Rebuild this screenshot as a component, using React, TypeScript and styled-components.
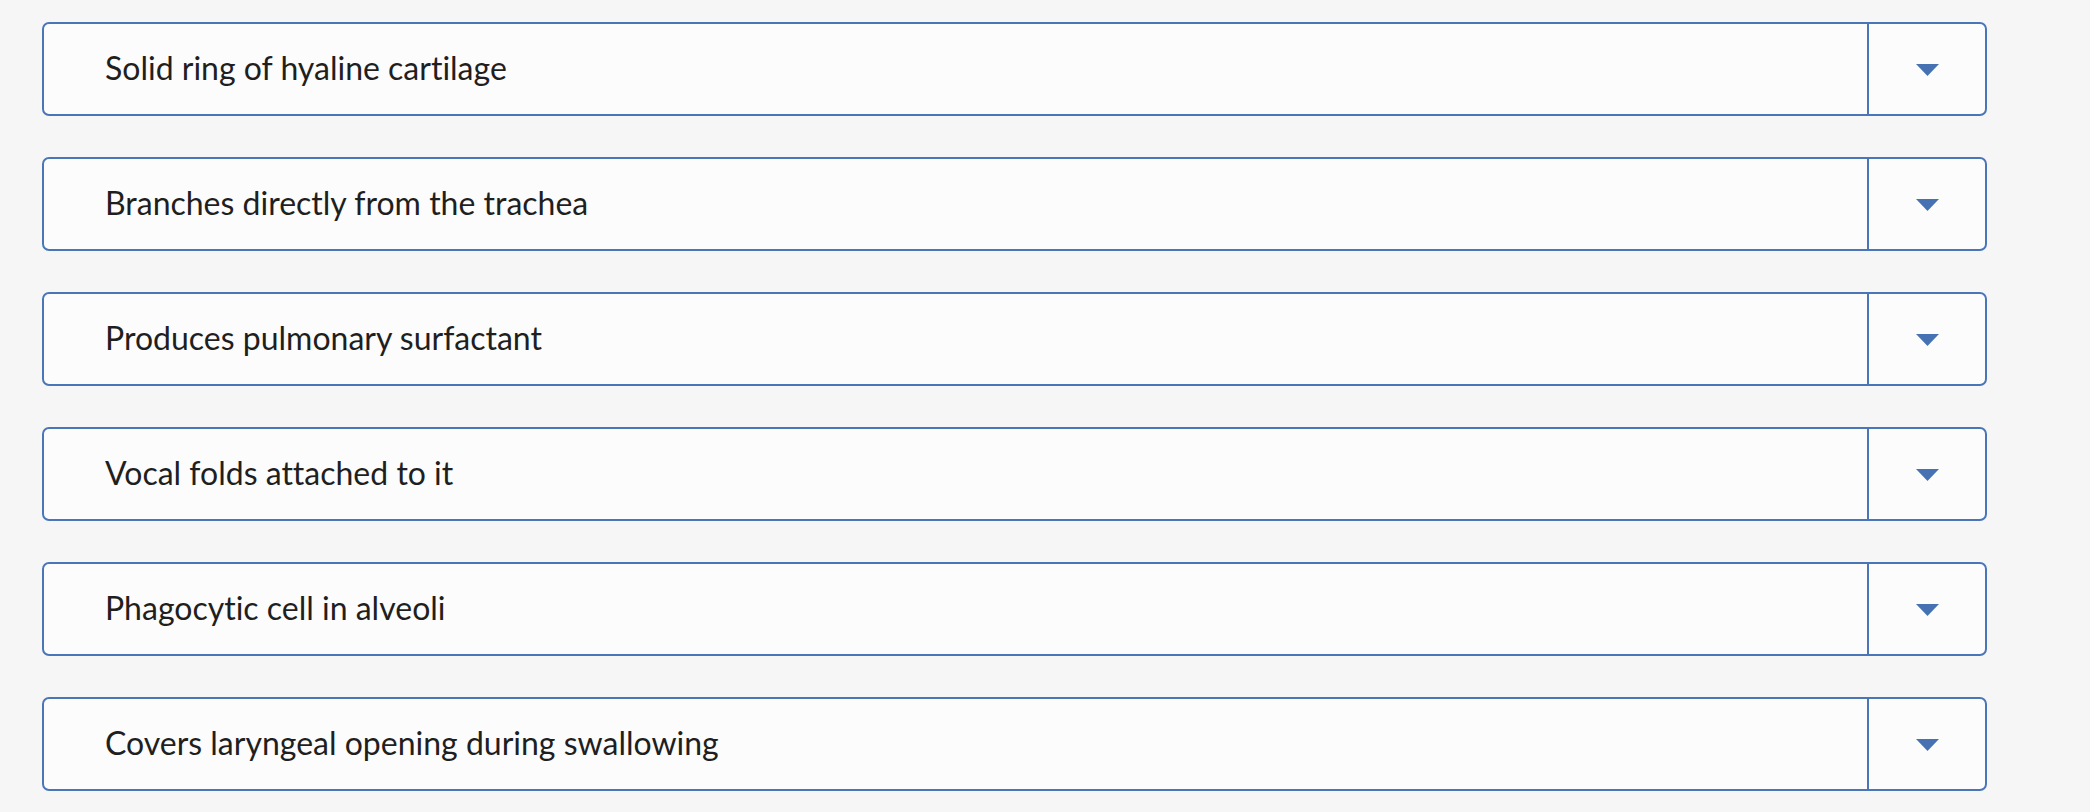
import React from "react";
import styled, { createGlobalStyle } from "styled-components";

const GlobalStyle = createGlobalStyle`
  html, body {
    margin: 0;
    padding: 0;
    background: #f6f6f6;
  }
  body {
    font-family: "Lato", "Open Sans", "Liberation Sans", sans-serif;
  }
`;

const Page = styled.div`
  display: flex;
  flex-direction: column;
  gap: 41px;
  padding: 22px 0 0 42px;
  width: 1945px;
`;

const Row = styled.div`
  display: flex;
  align-items: stretch;
  height: 94px;
  box-sizing: border-box;
  border: 2px solid #4a76b8;
  border-radius: 7px;
  background: #fcfcfc;
`;

const Label = styled.div`
  flex: 1;
  display: flex;
  align-items: center;
  padding-left: 61px;
  padding-bottom: 3px;
  font-size: 32px;
  color: #1f1f1f;
  font-variant-ligatures: none;
  font-feature-settings: "liga" 0, "clig" 0;
`;

const Toggle = styled.div`
  width: 118px;
  box-sizing: border-box;
  display: flex;
  align-items: center;
  justify-content: center;
  border-left: 2px solid #4a76b8;
`;

const Caret = () => (
  <svg width="23" height="12" viewBox="0 0 23 12" style={{ marginTop: 2 }}>
    <polygon points="0,0 23,0 11.5,12" fill="#4672b4" />
  </svg>
);

const items = [
  "Solid ring of hyaline cartilage",
  "Branches directly from the trachea",
  "Produces pulmonary surfactant",
  "Vocal folds attached to it",
  "Phagocytic cell in alveoli",
  "Covers laryngeal opening during swallowing",
];

export default function App() {
  return (
    <>
      <GlobalStyle />
      <Page>
        {items.map((t) => (
          <Row key={t}>
            <Label>{t}</Label>
            <Toggle>
              <Caret />
            </Toggle>
          </Row>
        ))}
      </Page>
    </>
  );
}
